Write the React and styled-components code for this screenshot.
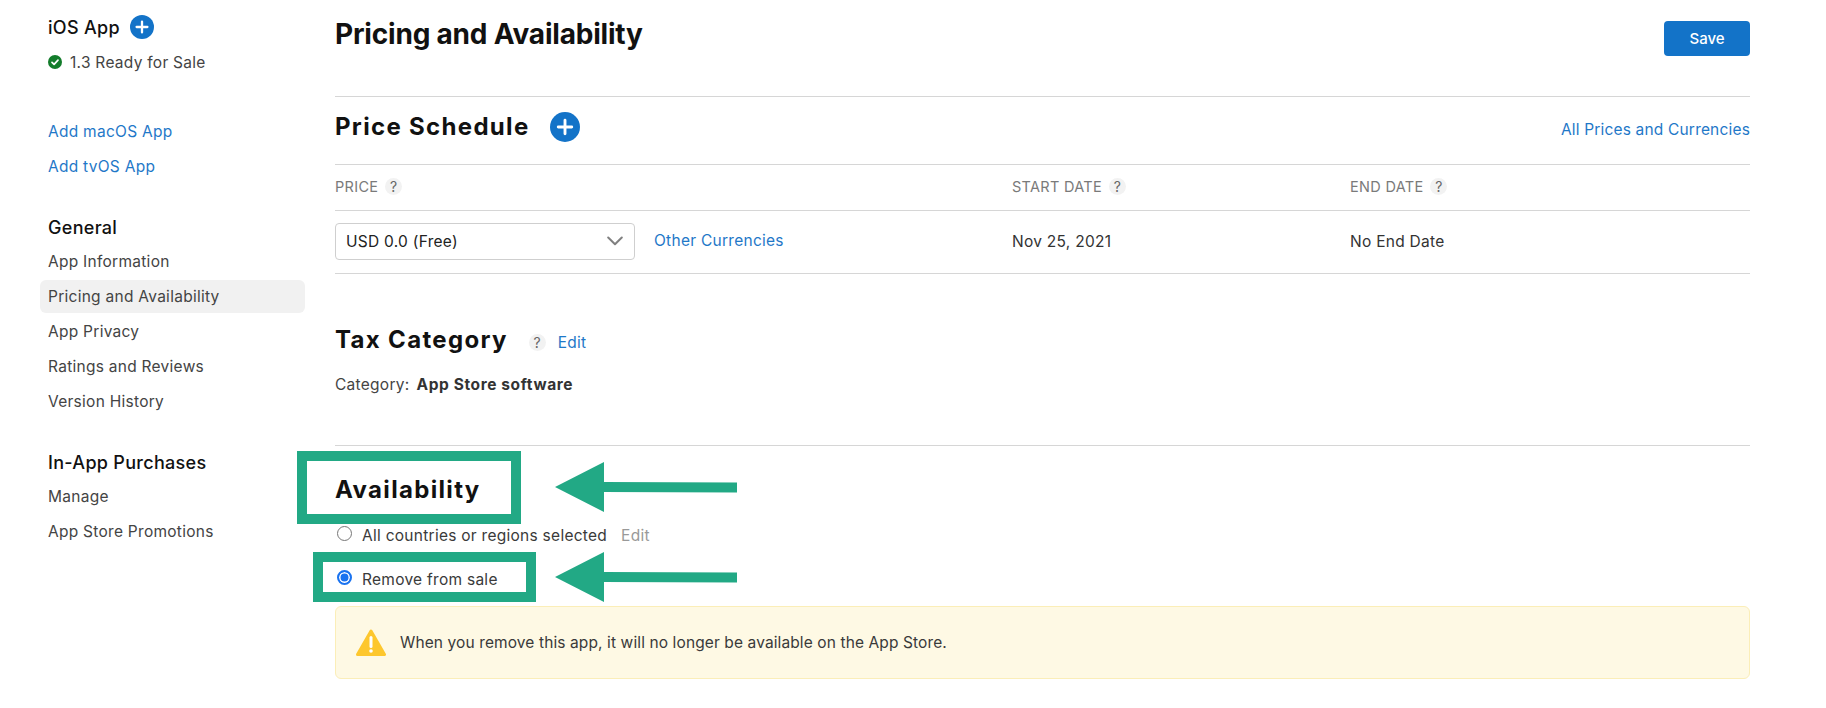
import React from "react";
import styled, { createGlobalStyle } from "styled-components";

const Global = createGlobalStyle`
  html, body { margin: 0; padding: 0; background: #fff; }
  body { font-family: Inter, "Liberation Sans", sans-serif; color: #333; overflow: hidden; }
  * { box-sizing: border-box; }
`;

const Page = styled.div`
  position: relative;
  width: 1826px;
  height: 708px;
  overflow: hidden;
  display: flex;
  padding-left: 40px;
  padding-right: 76px;
`;

const Sidebar = styled.nav`
  width: 265px;
  flex: none;
  margin-right: 30px;
  padding-top: 15px;
  display: flex;
  flex-direction: column;
`;

const AppTitleRow = styled.div`
  display: flex;
  align-items: center;
  gap: 10px;
  height: 24px;
  padding-left: 8px;
  font-size: 18px;
  font-weight: 500;
  letter-spacing: 0.3px;
  color: #111;
`;

const StatusRow = styled.div`
  display: flex;
  align-items: center;
  gap: 8px;
  height: 20px;
  margin-top: 13px;
  padding-left: 8px;
  font-size: 15.5px;
  letter-spacing: 0.27px;
  color: #444;
`;

const SideLinks = styled.div`
  margin-top: 42px;
  display: flex;
  flex-direction: column;
`;

const SideLink = styled.a`
  display: flex;
  align-items: center;
  height: ${(p) => (p.$active ? 33 : 35)}px;
  margin: ${(p) => (p.$active ? "1px 0" : "0")};
  padding-left: 8px;
  font-size: 15.5px;
  letter-spacing: 0.27px;
  color: ${(p) => (p.$blue ? "#1f78c8" : "#444")};
  background: ${(p) => (p.$active ? "#f1f1f1" : "transparent")};
  border-radius: 6px;
`;

const SideGroup = styled.div`
  margin-top: ${(p) => p.$top}px;
  display: flex;
  flex-direction: column;
`;

const SideHeading = styled.div`
  height: 26px;
  display: flex;
  align-items: center;
  padding-left: 8px;
  font-size: 18px;
  font-weight: 500;
  letter-spacing: 0.3px;
  color: #111;
  margin-bottom: 4px;
`;

const Main = styled.main`
  flex: 1;
  display: flex;
  flex-direction: column;
  min-width: 0;
`;

const TitleBar = styled.header`
  height: 97px;
  border-bottom: 1px solid #d6d6d6;
  display: flex;
  align-items: flex-start;
  justify-content: space-between;
`;

const PageTitle = styled.h1`
  margin: 14px 0 0 0;
  font-size: 28px;
  line-height: 40px;
  font-weight: 700;
  letter-spacing: -0.2px;
  color: #111;
`;

const SaveButton = styled.button`
  margin-top: 21px;
  width: 86px;
  height: 35px;
  border: 0;
  border-radius: 4px;
  background: #1373c8;
  color: #fff;
  font-family: inherit;
  font-size: 15px;
  font-weight: 500;
`;

const ScheduleHead = styled.div`
  height: 68px;
  border-bottom: 1px solid #d6d6d6;
  display: flex;
  align-items: center;
  gap: 20px;
  padding-bottom: 7px;
`;

const SectionTitle = styled.h2`
  margin: 0;
  font-size: 24px;
  line-height: 32px;
  font-weight: 700;
  letter-spacing: 1.32px;
  color: #111;
`;

const AllPrices = styled.a`
  margin-left: auto;
  margin-top: 5px;
  font-size: 15.5px;
  letter-spacing: 0.18px;
  color: #1f78c8;
`;

const PriceGrid = styled.div`
  display: grid;
  grid-template-columns: 677px 338px 1fr;
`;

const HeadCell = styled.div`
  height: 46px;
  border-bottom: 1px solid #d6d6d6;
  display: flex;
  align-items: center;
  gap: 7px;
  font-size: 14.5px;
  letter-spacing: 0.3px;
  color: #7a7a7a;
  padding-bottom: 3px;
`;

const Help = styled.span`
  width: 17px;
  height: 17px;
  border-radius: 50%;
  background: #f2f2f2;
  color: #666;
  font-size: 14px;
  display: inline-flex;
  align-items: center;
  justify-content: center;
  flex: none;
`;

const BodyCell = styled.div`
  height: 63px;
  border-bottom: 1px solid #d6d6d6;
  padding-bottom: 2px;
  display: flex;
  align-items: center;
  gap: 19px;
  font-size: 15.5px;
  letter-spacing: 0.27px;
  color: #333;
`;

const Select = styled.div`
  width: 300px;
  height: 37px;
  border: 1px solid #cfcfcf;
  border-radius: 4px;
  display: flex;
  align-items: center;
  justify-content: space-between;
  padding: 0 11px 0 10px;
  font-size: 15.5px;
  letter-spacing: 0.27px;
  color: #222;
`;

const InlineLink = styled.a`
  font-size: 15.5px;
  letter-spacing: 0.27px;
  color: ${(p) => (p.$muted ? "#999" : "#1f78c8")};
`;

const OtherLink = styled(InlineLink)`
  margin-top: -1px;
`;

const TaxSection = styled.section`
  height: 172px;
  border-bottom: 1px solid #d6d6d6;
  padding-top: 48px;
`;

const TaxHead = styled.div`
  display: flex;
  align-items: center;
  height: 36px;
`;

const TaxHelp = styled(Help)`
  margin-left: 21px;
  margin-top: 5px;
`;

const TaxEdit = styled(InlineLink)`
  margin-left: 12px;
  margin-top: 5px;
`;

const CategoryRow = styled.div`
  margin-top: 16px;
  height: 20px;
  display: flex;
  align-items: center;
  gap: 7px;
  font-size: 15.5px;
  letter-spacing: 0.27px;
  color: #444;
`;

const Strong = styled.strong`
  font-weight: 700;
  letter-spacing: 0.6px;
  color: #333;
`;

const AvailabilitySection = styled.section`
  padding-top: 28px;
`;

const RadioRow = styled.label`
  display: flex;
  align-items: center;
  height: 20px;
  margin-top: ${(p) => p.$top}px;
  padding-left: 2px;
  font-size: 15.5px;
  letter-spacing: 0.27px;
  color: #3a3a3a;
`;

const RadioMark = styled.span`
  width: 15px;
  height: 15px;
  flex: none;
  border-radius: 50%;
  margin-top: -3px;
  margin-right: 10px;
  background: ${(p) => (p.$on ? "#1a73f0" : "#fff")};
  border: ${(p) => (p.$on ? "2px solid #1a73f0" : "1px solid #777")};
  box-shadow: ${(p) => (p.$on ? "inset 0 0 0 1.5px #fff" : "none")};
`;

const RadioEdit = styled(InlineLink)`
  margin-left: 14px;
  margin-top: 1px;
`;

const Notice = styled.div`
  margin-top: 17px;
  height: 73px;
  border: 1px solid #fbeeb8;
  border-radius: 6px;
  background: #fef9e4;
  display: flex;
  align-items: center;
  padding-left: 20px;
  gap: 14px;
  font-size: 15.5px;
  letter-spacing: 0.11px;
  color: #3a3a3a;
`;

const Highlight = styled.div`
  position: absolute;
  left: ${(p) => p.$x}px;
  top: ${(p) => p.$y}px;
  width: ${(p) => p.$w}px;
  height: ${(p) => p.$h}px;
  border: 10px solid #22a985;
  pointer-events: none;
`;

const ArrowSvg = styled.svg`
  position: absolute;
  left: 555px;
  top: ${(p) => p.$y}px;
`;

const Plus = ({ size }) => (
  <svg width={size} height={size} viewBox="0 0 24 24" style={{ flex: "none" }}>
    <circle cx="12" cy="12" r="12" fill="#1373c8" />
    <path d="M12 6.6v10.8M6.6 12h10.8" stroke="#fff" strokeWidth="2.3" strokeLinecap="round" />
  </svg>
);

const Check = () => (
  <svg width="14" height="14" viewBox="0 0 14 14" style={{ flex: "none" }}>
    <circle cx="7" cy="7" r="7" fill="#137c2b" />
    <path d="M4 7.3l2.1 2.1L10 5.2" fill="none" stroke="#fff" strokeWidth="1.7" strokeLinecap="round" strokeLinejoin="round" />
  </svg>
);

const Chevron = () => (
  <svg width="16" height="10" viewBox="0 0 16 10">
    <path d="M1.2 1.5L8 8.2l6.8-6.7" fill="none" stroke="#808080" strokeWidth="2" strokeLinecap="round" strokeLinejoin="round" />
  </svg>
);

const Warning = () => (
  <svg width="30" height="28" viewBox="0 0 30 28" style={{ flex: "none" }}>
    <path d="M15 2L28.5 25.5H1.5Z" fill="#fdc72e" stroke="#fdc72e" strokeWidth="3" strokeLinejoin="round" />
    <path d="M15 8.5v9" stroke="#fff" strokeWidth="3" strokeLinecap="round" />
    <circle cx="15" cy="22" r="1.8" fill="#fff" />
  </svg>
);

const Arrow = ({ y }) => (
  <ArrowSvg $y={y} width="183" height="50" viewBox="0 0 183 50">
    <path d="M0 25L49 0V20L182 20.5V30.5L49 30V50Z" fill="#22a985" />
  </ArrowSvg>
);

export default function App() {
  return (
    <Page>
      <Global />
      <Sidebar>
        <AppTitleRow>iOS App <Plus size={24} /></AppTitleRow>
        <StatusRow><Check /> 1.3 Ready for Sale</StatusRow>
        <SideLinks>
          <SideLink $blue>Add macOS App</SideLink>
          <SideLink $blue>Add tvOS App</SideLink>
        </SideLinks>
        <SideGroup $top={30}>
          <SideHeading>General</SideHeading>
          <SideLink>App Information</SideLink>
          <SideLink $active>Pricing and Availability</SideLink>
          <SideLink>App Privacy</SideLink>
          <SideLink>Ratings and Reviews</SideLink>
          <SideLink>Version History</SideLink>
        </SideGroup>
        <SideGroup $top={30}>
          <SideHeading>In-App Purchases</SideHeading>
          <SideLink>Manage</SideLink>
          <SideLink>App Store Promotions</SideLink>
        </SideGroup>
      </Sidebar>
      <Main>
        <TitleBar>
          <PageTitle>Pricing and Availability</PageTitle>
          <SaveButton>Save</SaveButton>
        </TitleBar>
        <ScheduleHead>
          <SectionTitle>Price Schedule</SectionTitle>
          <Plus size={30} />
          <AllPrices>All Prices and Currencies</AllPrices>
        </ScheduleHead>
        <PriceGrid>
          <HeadCell>PRICE <Help>?</Help></HeadCell>
          <HeadCell>START DATE <Help>?</Help></HeadCell>
          <HeadCell>END DATE <Help>?</Help></HeadCell>
          <BodyCell>
            <Select>USD 0.0 (Free) <Chevron /></Select>
            <OtherLink>Other Currencies</OtherLink>
          </BodyCell>
          <BodyCell>Nov 25, 2021</BodyCell>
          <BodyCell>No End Date</BodyCell>
        </PriceGrid>
        <TaxSection>
          <TaxHead>
            <SectionTitle>Tax Category</SectionTitle>
            <TaxHelp>?</TaxHelp>
            <TaxEdit>Edit</TaxEdit>
          </TaxHead>
          <CategoryRow>Category: <Strong>App Store software</Strong></CategoryRow>
        </TaxSection>
        <AvailabilitySection>
          <SectionTitle>Availability</SectionTitle>
          <RadioRow $top={19}>
            <RadioMark />All countries or regions selected
            <RadioEdit $muted>Edit</RadioEdit>
          </RadioRow>
          <RadioRow $top={24}>
            <RadioMark $on />Remove from sale
          </RadioRow>
          <Notice>
            <Warning />
            When you remove this app, it will no longer be available on the App Store.
          </Notice>
        </AvailabilitySection>
      </Main>
      <Highlight $x={297} $y={451} $w={224} $h={73} />
      <Highlight $x={313} $y={552} $w={223} $h={50} />
      <Arrow y={462} />
      <Arrow y={552} />
    </Page>
  );
}
